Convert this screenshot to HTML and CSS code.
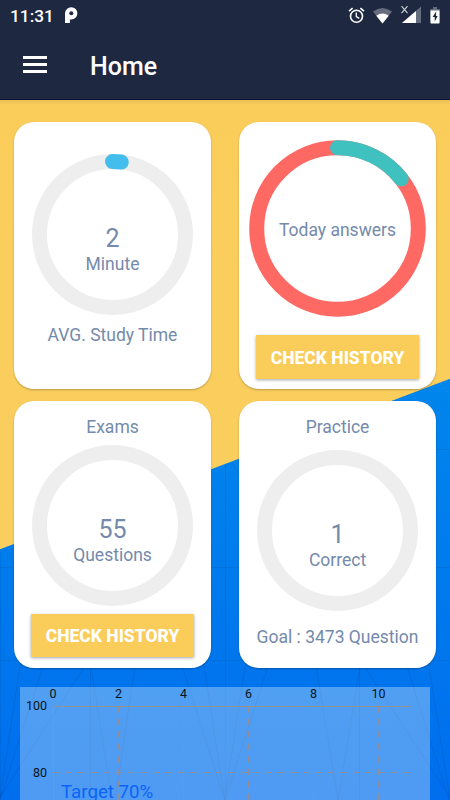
FILE: index.html
```html
<!DOCTYPE html>
<html lang="en">
<head>
    <meta charset="UTF-8">
    <meta name="viewport" content="width=device-width, initial-scale=1.0">
    <title>Home</title>
    <link rel="stylesheet" href="styles.css">
</head>
<body>
    <header class="header">
        <div class="status-bar">
            <span class="time">11:31</span>
            <svg class="app-icon" width="13" height="17" viewBox="0 0 13 17">
                <path d="M0 16V6.200A6.200 6.200 0 1 1 6.200 12.600H4.900V16z" fill="#fff"/>
                <circle cx="6.300" cy="6.300" r="2" fill="#1e2840"/>
            </svg>
            <div class="status-icons">
                <svg width="17" height="17" viewBox="0 0 17 17" fill="none" stroke="#fff">
                    <circle cx="8.500" cy="9.200" r="6" stroke-width="1.600"/>
                    <path d="M8.300 5.500V9.600l3 1.800" stroke-width="1.300"/>
                    <path d="M1 4.200L4.600 1.200M16 4.200L12.400 1.200" stroke-width="1.600"/>
                </svg>
                <svg width="19" height="17" viewBox="0 0 19 17">
                    <path d="M0 4.600Q9.500-2.800 19 4.600L9.500 16.600z" fill="#656c7d"/>
                    <path d="M3.300 8.800Q9.500 4.400 15.700 8.800L9.500 16.600z" fill="#fff"/>
                </svg>
                <svg width="21" height="19" viewBox="0 0 21 19">
                    <path d="M1 18L20 1.500v16.500z" fill="#656c7d"/>
                    <path d="M1 18L15 6v12z" fill="#fff"/>
                    <path d="M.5 1.200l6 7M6.500 1.200l-6 7" stroke="#c8cbd2" stroke-width="1.200"/>
                </svg>
                <svg width="10" height="17" viewBox="0 0 10 17">
                    <path d="M3 0h4v2h2.600v2H.4V2H3z" fill="#656c7d"/>
                    <path d="M.4 3.400h9.200V15.600a1 1 0 0 1-1 1H1.400a1 1 0 0 1-1-1z" fill="#fff"/>
                    <path d="M6.200 4.400L2.600 10h2.100v4.400l3-5.400H6z" fill="#1e2840"/>
                </svg>
            </div>
        </div>
        <div class="toolbar">
            <div class="menu"><span></span><span></span><span></span></div>
            <h1>Home</h1>
        </div>
    </header>

    <main class="content">
        <svg class="backdrop" width="450" height="700" viewBox="0 100 450 700">
            <defs>
                <linearGradient id="blue" x1="0" y1="0" x2="0" y2="1">
                    <stop offset="0" stop-color="#0086ec"/>
                    <stop offset="1" stop-color="#006eee"/>
                </linearGradient>
            </defs>
            <path d="M0 549.300L450 378.700V800H0z" fill="url(#blue)"/>
            <g fill="none" stroke="#00346e" stroke-opacity=".15">
                <path d="M0 567.500H450M0 660.500H450M405 449.500H450M225.500 464V800M.5 549V800" stroke-opacity=".1"/>
                <path d="M90.500 668V800M359.500 668V800M232 463l8 13"/>
                <path d="M0 797L21 660M0 800L45 660M0 797L89 660M90 660L112 800M136 660L115 800M180 660L225 800M203 660L225 800"/>
                <path d="M225 797L246 660M225 800L270 660M315 660L338 800M361 660L338 800M360 660L450 797M405 660L449 800M428 660L450 800"/>
            </g>
        </svg>

        <div class="cards">
            <section class="card card-study">
                <div class="ring">
                    <svg width="161" height="161" viewBox="0 0 161 161">
                        <circle class="track" cx="80.500" cy="80.500" r="73"/>
                        <circle class="progress blue" cx="80.500" cy="80.500" r="73" pathLength="360" stroke-dasharray="7 353"/>
                    </svg>
                    <div class="ring-text"><b>2</b><span>Minute</span></div>
                </div>
                <p>AVG. Study Time</p>
            </section>

            <section class="card card-today">
                <div class="ring">
                    <svg width="177" height="177" viewBox="0 0 177 177">
                        <circle class="track red" cx="88.500" cy="88.500" r="80.800"/>
                        <circle class="progress teal" cx="88.500" cy="88.500" r="80.800" pathLength="360" stroke-dasharray="52 308"/>
                    </svg>
                    <div class="ring-text"><span>Today answers</span></div>
                </div>
                <button class="history">CHECK HISTORY</button>
            </section>

            <section class="card card-exams">
                <p>Exams</p>
                <div class="ring">
                    <svg width="161" height="161" viewBox="0 0 161 161">
                        <circle class="track" cx="80.500" cy="80.500" r="73"/>
                    </svg>
                    <div class="ring-text"><b>55</b><span>Questions</span></div>
                </div>
                <button class="history">CHECK HISTORY</button>
            </section>

            <section class="card card-practice">
                <p>Practice</p>
                <div class="ring">
                    <svg width="161" height="161" viewBox="0 0 161 161">
                        <circle class="track" cx="80.500" cy="80.500" r="73"/>
                    </svg>
                    <div class="ring-text"><b>1</b><span>Correct</span></div>
                </div>
                <p class="goal">Goal : 3473 Question</p>
            </section>
        </div>

        <div class="chart">
            <svg width="410" height="113" viewBox="20 687 410 113">
                <g class="grid">
                    <path d="M53.500 706V800M118.500 706V800M183.500 706V800M248.500 706V800M313.500 706V800M378.500 706V800"/>
                    <path d="M53 772.500H411"/>
                    <path class="axis" d="M53 706.500H411M53.500 706V800"/>
                    <path d="M53 706.500H411"/>
                </g>
                <g class="x-labels">
                    <text x="53" y="698">0</text>
                    <text x="118.500" y="698">2</text>
                    <text x="183.500" y="698">4</text>
                    <text x="248.500" y="698">6</text>
                    <text x="313.500" y="698">8</text>
                    <text x="378.500" y="698">10</text>
                </g>
                <g class="y-labels">
                    <text x="47" y="710">100</text>
                    <text x="47" y="777">80</text>
                </g>
                <text class="target" x="61" y="798">Target 70%</text>
            </svg>
        </div>
    </main>
</body>
</html>
```
FILE: styles.css
```css
* {
    box-sizing: border-box;
}
body {
    margin: 0;
    height: 800px;
    overflow: hidden;
    font-family: Roboto, sans-serif;
    background-color: #facd5b;
}
svg {
    display: block;
}
.header {
    height: 100px;
    background-color: #1e2840;
    border-bottom: 1px solid #0c1230;
    color: #fff;
}
.status-bar {
    display: flex;
    align-items: flex-start;
    height: 32px;
    padding: 6px 10px 0;
}
.time {
    width: 55px;
    font-size: 17.300px;
    font-weight: 500;
    line-height: 20px;
}
.app-icon {
    margin-top: 1px;
}
.status-icons {
    display: flex;
    align-items: flex-end;
    gap: 8.500px;
    height: 18px;
    margin-left: auto;
}
.toolbar {
    display: flex;
    align-items: center;
    height: 67px;
    padding-left: 23px;
}
.menu {
    display: flex;
    flex-direction: column;
    gap: 4px;
    width: 67px;
    padding-bottom: 2px;
}
.menu span {
    width: 24px;
    height: 3px;
    background-color: #fff;
}
h1 {
    margin: 0;
    padding-top: 2px;
    font-size: 25px;
    font-weight: 500;
}
.content {
    position: relative;
    height: 700px;
    background: linear-gradient(#e9bf55, #facd5b 5px, #facf60);
}
/* the picture behind the cards */
.backdrop {
    position: absolute;
    top: 0;
    left: 0;
}
.cards {
    position: relative;
    display: grid;
    grid-template-columns: 197px 197px;
    grid-auto-rows: 266.500px;
    gap: 12.500px 28px;
    padding: 22.300px 14px 0;
}
.card {
    display: flex;
    flex-direction: column;
    align-items: center;
    border-radius: 20px;
    background-color: #fff;
    box-shadow: 0 1px 2px rgba(0, 0, 0, 0.25);
    color: #748aab;
}
.card p {
    margin: 0;
    font-size: 17.500px;
    line-height: 23px;
}
.card-study {
    padding-top: 31.500px;
}
.card-study p {
    margin-top: 9.700px;
}
.card-today {
    padding-top: 18px;
}
.card-exams,
.card-practice {
    padding-top: 14.500px;
}
.card-exams .ring {
    margin-top: 6.500px;
}
.card-practice .ring {
    margin-top: 11.500px;
}
.card .goal {
    margin-top: 15px;
}
.ring {
    display: grid;
}
.ring > * {
    grid-area: 1 / 1;
}
.ring-text {
    display: flex;
    flex-direction: column;
    align-items: center;
    padding-top: 71px;
    font-size: 17.500px;
    line-height: 23px;
}
.ring-text b {
    font-size: 25px;
    font-weight: 400;
    line-height: 28px;
}
.card-today .ring-text {
    padding-top: 79px;
}
.track,
.progress {
    fill: none;
    stroke-width: 15;
}
.track {
    stroke: #eee;
}
.red {
    stroke: #ff6963;
}
.progress {
    stroke-linecap: round;
    transform: rotate(-90deg);
    transform-origin: center;
}
.blue {
    stroke: #42bdec;
}
.teal {
    stroke: #3ec1bf;
}
.history {
    width: 163px;
    height: 43.500px;
    padding: 1px 0 0;
    border: none;
    background-color: #facd5b;
    box-shadow: 0 1px 3px rgba(0, 0, 0, 0.35);
    color: #fff;
    font-family: inherit;
    font-size: 17.500px;
    font-weight: 800;
}
.card-today .history {
    margin-top: 18px;
}
.card-exams .history {
    margin-top: 7.500px;
}
.chart {
    position: relative;
    width: 410px;
    height: 113px;
    margin: 19.200px 0 0 20px;
    background-color: rgba(255, 255, 255, 0.31);
}
.grid path {
    fill: none;
    stroke: #a08c88;
    stroke-opacity: 0.8;
    stroke-dasharray: 6.500 6;
}
.grid .axis {
    stroke: #a48e80;
    stroke-dasharray: none;
}
.chart text {
    fill: #0a1420;
    font-size: 12.500px;
}
.x-labels {
    text-anchor: middle;
}
.y-labels {
    text-anchor: end;
}
.chart .target {
    fill: #0b63f6;
    font-size: 18.700px;
}
```
